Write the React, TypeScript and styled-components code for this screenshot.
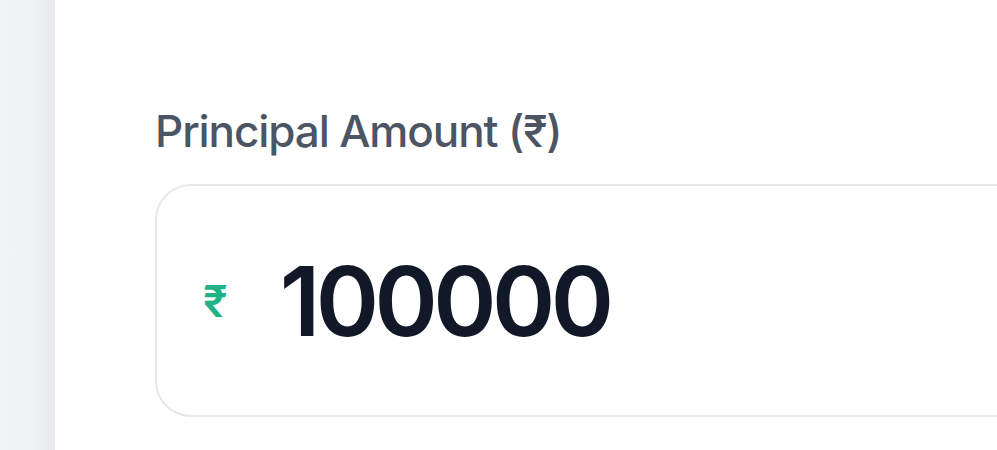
import React, { useState } from "react";
import styled, { createGlobalStyle } from "styled-components";

const GlobalStyle = createGlobalStyle`
  html, body {
    margin: 0;
    padding: 0;
    height: 100%;
    overflow: hidden;
  }
  body {
    font-family: Inter, "Noto Sans", "Liberation Sans", sans-serif;
    background: #ffffff;
  }
`;

const Page = styled.div`
  display: flex;
  height: 450px;
  width: 997px;
  overflow: hidden;
`;

const Rail = styled.div`
  flex: 0 0 55px;
  background: linear-gradient(90deg, #f3f4f6 0%, #f0f1f3 60%, #e6e8ea 100%);
`;

const Card = styled.div`
  flex: 0 0 895px;
  background: #ffffff;
  padding: 104px 0 0 100px;
  box-sizing: border-box;
  box-shadow: 1px 0 3px rgba(17, 24, 39, 0.02);
`;

const Gutter = styled.div`
  flex: 1;
  background: linear-gradient(90deg, #fdfdfd 0%, #fbfbfc 100%);
`;

const Field = styled.div`
  display: flex;
  flex-direction: column;
  gap: 26px;
`;

const Label = styled.label`
  font-size: 44px;
  line-height: 54px;
  font-weight: 500;
  color: #4b5563;
  letter-spacing: -1.1px;
`;

const InputBox = styled.div`
  display: flex;
  align-items: center;
  gap: 52px;
  width: 1000px;
  height: 233px;
  box-sizing: border-box;
  padding-left: 46px;
  border: 2px solid #e5e7eb;
  border-radius: 36px;
  background: #ffffff;
`;

const Currency = styled.span`
  font-size: 44px;
  font-weight: 600;
  color: #1fb386;
`;

const AmountInput = styled.input`
  border: none;
  outline: none;
  background: transparent;
  font-family: inherit;
  font-size: 96px;
  font-weight: 600;
  color: #111827;
  letter-spacing: -4.6px;
  width: 600px;
  padding: 0;
`;

export default function App() {
  const [amount, setAmount] = useState("100000");
  return (
    <>
      <GlobalStyle />
      <Page>
        <Rail />
        <Card>
          <Field>
            <Label htmlFor="principal">Principal Amount (₹)</Label>
            <InputBox>
              <Currency>₹</Currency>
              <AmountInput
                id="principal"
                value={amount}
                onChange={(e) => setAmount(e.target.value)}
              />
            </InputBox>
          </Field>
        </Card>
        <Gutter />
      </Page>
    </>
  );
}
